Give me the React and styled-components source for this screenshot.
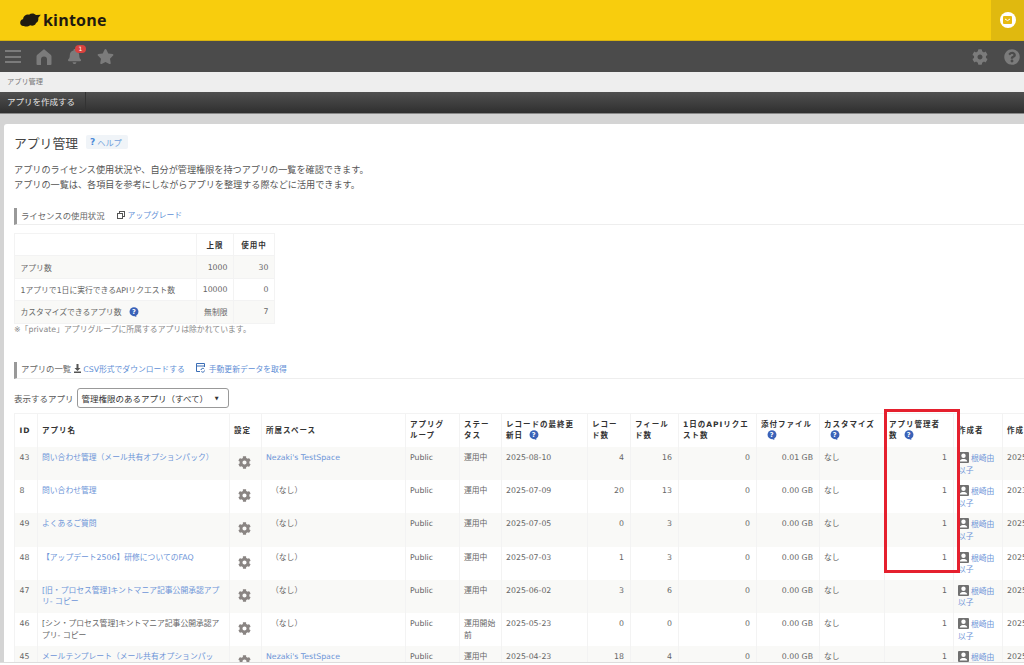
import React from "react";
import styled, { createGlobalStyle } from "styled-components";
import { FaBell, FaCog, FaStar, FaQuestionCircle } from "react-icons/fa";

const GlobalStyle = createGlobalStyle`
  html, body {
    margin: 0;
    height: 665px;
    overflow: hidden;
    background: #fff;
    color: #555;
    font-family: "DejaVu Sans", "Noto Sans CJK JP", sans-serif;
  }
  * { box-sizing: border-box; }
`;

const Page = styled.div`
  width: 1024px;
  height: 665px;
  display: flex;
  flex-direction: column;
  overflow: hidden;
  position: relative;
  background: #d4d4d4;
`;

const Header = styled.header`
  flex: 0 0 41px;
  display: flex;
  justify-content: space-between;
  background: #f8cd0d;
  border-bottom: 1px solid #d8b30f;
`;

const Logo = styled.div`
  display: flex;
  align-items: center;
  gap: 2px;
  padding-left: 20px;
  color: #1f1a10;
  font: 700 16px "Open Sans", sans-serif;
  letter-spacing: 0.2px;
`;

const NoticeTab = styled.div`
  width: 33px;
  display: flex;
  align-items: center;
  justify-content: center;
  background: #e0b90f;
`;

const NoticeDot = styled.div`
  width: 16px;
  height: 16px;
  border-radius: 50%;
  background: #fff;
  display: flex;
  align-items: center;
  justify-content: center;
`;

const Nav = styled.nav`
  flex: 0 0 31px;
  display: flex;
  align-items: center;
  justify-content: space-between;
  background: #4b4b4b;
  color: #7b7b7b;
  padding: 0 4px 0 5px;
`;

const NavGroup = styled.div`
  display: flex;
  align-items: center;
  gap: ${(p) => p.$gap}px;
`;

const Burger = styled.div`
  width: 16px;
  height: 13px;
  border-top: 2px solid #7b7b7b;
  border-bottom: 2px solid #7b7b7b;
  position: relative;
  &::after {
    content: "";
    position: absolute;
    left: 0;
    right: 0;
    top: 3.5px;
    height: 2px;
    background: #7b7b7b;
  }
`;

const BellWrap = styled.div`
  position: relative;
  display: flex;
`;

const Badge = styled.span`
  position: absolute;
  top: -4px;
  right: -4px;
  width: 11px;
  height: 8px;
  border-radius: 4px;
  background: #d9423f;
  color: #fff;
  font-size: 6px;
  line-height: 8px;
  text-align: center;
`;

const Breadcrumb = styled.div`
  flex: 0 0 20px;
  background: #eeeeee;
  color: #777;
  font-size: 7.2px;
  line-height: 19px;
  padding-left: 7px;
`;

const Toolbar = styled.div`
  flex: 0 0 22px;
  display: flex;
  background: linear-gradient(#505050, #2f2f2f);
  border-bottom: 1px solid #888;
`;

const ToolbarButton = styled.div`
  width: 86px;
  padding-left: 7px;
  color: #e4e4e4;
  font-size: 8.5px;
  line-height: 20px;
  border-right: 1px solid #333;
`;

const Card = styled.main`
  flex: 1;
  margin: 10px 0 0 4px;
  padding: 9px 0 0 10px;
  background: #fff;
  border-radius: 3px 0 0 0;
  overflow: hidden;
  position: relative;
`;

const TitleRow = styled.div`
  display: flex;
  align-items: center;
  gap: 8px;
  height: 18px;
`;

const Title = styled.h1`
  margin: 0;
  font-size: 12.8px;
  font-weight: 400;
  color: #444;
`;

const HelpChip = styled.a`
  display: flex;
  align-items: center;
  gap: 2px;
  height: 14px;
  padding: 0 6px 0 4px;
  background: #f0f4f8;
  border-radius: 2px;
  color: #6f9fdc;
  font-size: 8.2px;
  b {
    color: #4a8ad8;
    font-size: 9px;
  }
`;

const Lead = styled.p`
  margin: 12px 0 0;
  font-size: 9.15px;
  line-height: 14.5px;
  color: #555;
`;

const SectionHead = styled.div`
  display: flex;
  align-items: center;
  height: 17px;
  margin-top: ${(p) => p.$top}px;
  border-left: 3px solid #999;
  border-bottom: 1px solid #eee;
  padding: 0 0 3px 4px;
  font-size: 8.4px;
  color: #666;
`;

const SectionLink = styled.a`
  display: inline-flex;
  align-items: center;
  gap: ${(p) => p.$gap}px;
  margin-left: ${(p) => p.$left}px;
  color: #5f8fd6;
  font-size: 7.8px;
`;

const LicenseTable = styled.table`
  margin-top: 8px;
  border-collapse: collapse;
  table-layout: fixed;
  width: 260px;
  font-size: 7.8px;
  color: #666;
  tr { height: 22.4px; }
  tbody tr { background: #f9f9f7; }
  tbody tr:nth-child(even) { background: #fff; }
  th, td {
    border: 1px solid #f3f3f3;
    padding: 0 5.5px;
  }
  th {
    color: #333;
    font-size: 7.5px;
    font-weight: 700;
    letter-spacing: 1px;
    text-align: center;
  }
  td { white-space: nowrap; }
  td + td { text-align: right; }
`;

const Note = styled.div`
  font-size: 7.85px;
  line-height: 12px;
  color: #888;
`;

const FilterRow = styled.div`
  display: flex;
  align-items: center;
  gap: 3px;
  margin-top: 9px;
  font-size: 8.5px;
  color: #555;
`;

const Select = styled.div`
  width: 152px;
  height: 20px;
  display: flex;
  align-items: center;
  justify-content: space-between;
  padding: 0 9px 0 4px;
  border: 1px solid #999;
  border-radius: 3px;
  color: #333;
  font-size: 8.5px;
  i {
    font-style: normal;
    font-size: 5px;
  }
`;

const AppTable = styled.table`
  margin-top: 5px;
  border-collapse: collapse;
  table-layout: fixed;
  width: 1070px;
  font-size: 7.8px;
  color: #666;
  thead tr { height: 34px; }
  tbody tr { height: 33.2px; }
  tbody tr:nth-child(odd) { background: #f9f9f7; }
  th, td {
    border-left: 1px solid #f3f3f3;
    padding: 0 5.5px 0 4.5px;
    line-height: 11.5px;
  }
  thead tr { border-top: 1px solid #f3f3f3; }
  th {
    color: #333;
    font-weight: 700;
    font-size: 7.5px;
    text-align: left;
    letter-spacing: 1px;
    line-break: strict;
  }
  td { vertical-align: top; padding-top: 5px; }
`;

const NumCell = styled.td`
  text-align: right;
`;

const StatusCell = styled.td`
  && { padding-right: 2px; }
`;

const GearCell = styled.td`
  text-align: center;
  color: #8a8583;
  && { padding: 9px 1px 0 0; }
`;

const LinkText = styled.a`
  color: #6d95d8;
`;

const Plain = styled.span`
  padding-left: ${(p) => (p.$pad ? 5 : 0)}px;
`;

const Creator = styled.a`
  color: #6d95d8;
  svg { vertical-align: -2px; margin-right: 2px; }
`;

const Highlight = styled.div`
  position: absolute;
  left: 880px;
  top: 285px;
  width: 76px;
  height: 164px;
  border: 3px solid #e5202e;
  pointer-events: none;
`;

const Footer = styled.div`
  position: absolute;
  left: 0;
  right: 0;
  bottom: 0;
  height: 3px;
  background: #fff;
  border-top: 1px solid #ddd;
`;

const Tip = ({ left = 0 }) => (
  <svg width="10" height="10" viewBox="0 0 18 18" style={{ marginLeft: left, verticalAlign: -2 }}>
    <circle cx="9" cy="8.5" r="8" fill="#3a62b8" />
    <path d="M7 15l6-2 0 5z" fill="#3a62b8" />
    <text x="9" y="13" fontSize="12" fontWeight="700" textAnchor="middle" fill="#fff">?</text>
  </svg>
);

const UserIcon = () => (
  <svg width="11" height="11" viewBox="0 0 11 11">
    <rect width="11" height="11" rx="1" fill="#707070" />
    <circle cx="5.5" cy="3.800" r="2.200" fill="#fff" />
    <path d="M1.800 9.500c0-2.200 2.200-2.600 3.700-2.600s3.700.4 3.700 2.600z" fill="#fff" />
  </svg>
);

const HomeIcon = () => (
  <svg width="16" height="16" viewBox="0 0 16 16" fill="#7b7b7b">
    <path d="M8 .5c.4 0 .8.2 1 .4l5.700 4.800c.5.4.8 1 .8 1.700V15a1 1 0 0 1-1 1H11V10.500a3 3 0 0 0-6 0V16H1.500a1 1 0 0 1-1-1V7.400c0-.7.3-1.300.8-1.700L7 .9c.2-.2.6-.4 1-.4z" />
  </svg>
);

const headers = [
  ["ID", 22.5], ["アプリ名", 192], ["設定", 32], ["所属スペース", 144], ["アプリグループ", 54],
  ["ステータス", 42], ["レコードの最終更新日", 86, true], ["レコード数", 43], ["フィールド数", 48],
  ["1日のAPIリクエスト数", 78], ["添付ファイル", 63, true], ["カスタマイズ", 65, true],
  ["アプリ管理者数", 69, true], ["作成者", 49], ["作成日時", 82.5],
];

const SPACE = "Nezaki's TestSpace";

const apps = [
  { id: 43, name: "問い合わせ管理（メール共有オプションパック）", space: SPACE, date: "2025-08-10", rec: 4, fld: 16, size: "0.01 GB", made: "2025-07-11 10:45" },
  { id: 8, name: "問い合わせ管理", date: "2025-07-09", rec: 20, fld: 13, size: "0.00 GB", made: "2023-04-12 15:10" },
  { id: 49, name: "よくあるご質問", date: "2025-07-05", rec: 0, fld: 3, size: "0.00 GB", made: "2025-07-05 17:41" },
  { id: 48, name: "【アップデート2506】研修についてのFAQ", date: "2025-07-03", rec: 1, fld: 3, size: "0.00 GB", made: "2025-06-30 16:32" },
  { id: 47, name: "[旧・プロセス管理]キントマニア記事公開承認アプリ- コピー", date: "2025-06-02", rec: 3, fld: 6, size: "0.00 GB", made: "2025-05-23 19:35" },
  { id: 46, name: "[シン・プロセス管理]キントマニア記事公開承認アプリ- コピー", plain: true, status: "運用開始前", date: "2025-05-23", rec: 0, fld: 0, size: "0.00 GB", made: "2025-05-23 19:30" },
  { id: 45, name: "メールテンプレート（メール共有オプションパック）", space: SPACE, date: "2025-04-23", rec: 18, fld: 4, size: "0.00 GB", made: "2025-04-23 11:02" },
];

const App = () => (
  <Page lang="ja">
    <GlobalStyle />
    <Header>
      <Logo>
        <svg width="21" height="16" viewBox="0 0 21 15">
          <path d="M4 13.500c-2 .5-4-1-3.800-3.500C.3 8 1.500 6.800 3 6.700 3.500 3 6.500 1.600 9 2.200 11 .5 14.500.7 16 2.600l4.800-.3-2.500 2.900c.4 2.800-.7 4.700-2.300 5.300-.6 2.400-3.800 3.300-5.800 2.200-1.800 1.500-4.800 1.800-6.200.8z" fill="#1f1a10" />
        </svg>
        kintone
      </Logo>
      <NoticeTab>
        <NoticeDot>
          <svg width="9" height="8" viewBox="0 0 9 8">
            <rect width="9" height="8" rx="1" fill="#e8bb10" />
            <path d="M2 3l2.500 1.600L7 3" fill="none" stroke="#fff" strokeWidth="1" />
          </svg>
        </NoticeDot>
      </NoticeTab>
    </Header>
    <Nav>
      <NavGroup $gap={15}>
        <Burger />
        <HomeIcon />
        <BellWrap>
          <FaBell size={15} />
          <Badge>1</Badge>
        </BellWrap>
        <FaStar size={17} />
      </NavGroup>
      <NavGroup $gap={16}>
        <FaCog size={16} />
        <FaQuestionCircle size={16} />
      </NavGroup>
    </Nav>
    <Breadcrumb>アプリ管理</Breadcrumb>
    <Toolbar>
      <ToolbarButton>アプリを作成する</ToolbarButton>
    </Toolbar>
    <Card>
      <TitleRow>
        <Title>アプリ管理</Title>
        <HelpChip><b>?</b>ヘルプ</HelpChip>
      </TitleRow>
      <Lead>
        アプリのライセンス使用状況や、自分が管理権限を持つアプリの一覧を確認できます。<br />
        アプリの一覧は、各項目を参考にしながらアプリを整理する際などに活用できます。
      </Lead>
      <SectionHead $top={16}>
        ライセンスの使用状況
        <SectionLink $left={12} $gap={3}>
          <svg width="8" height="8" viewBox="0 0 8 8" fill="none" stroke="#555">
            <rect x="2.500" y="0.500" width="5" height="5" />
            <rect x="0.500" y="2.500" width="5" height="5" fill="#fff" />
          </svg>
          アップグレード
        </SectionLink>
      </SectionHead>
      <LicenseTable>
        <colgroup>
          <col width="182" />
          <col width="37" />
          <col width="41" />
        </colgroup>
        <thead>
          <tr><th /><th>上限</th><th>使用中</th></tr>
        </thead>
        <tbody>
          <tr><td>アプリ数</td><td>1000</td><td>30</td></tr>
          <tr><td>1アプリで1日に実行できるAPIリクエスト数</td><td>10000</td><td>0</td></tr>
          <tr><td>カスタマイズできるアプリ数<Tip left={8} /></td><td>無制限</td><td>7</td></tr>
        </tbody>
      </LicenseTable>
      <Note>※「private」アプリグループに所属するアプリは除かれています。</Note>
      <SectionHead $top={26}>
        アプリの一覧
        <SectionLink $left={3} $gap={2}>
          <svg width="7" height="9" viewBox="0 0 7 9" fill="#555">
            <path d="M2.500 0h2v4H6.500L3.500 7 .5 4h2zM0 7.500h7V9H0z" />
          </svg>
          CSV形式でダウンロードする
        </SectionLink>
        <SectionLink $left={11} $gap={4}>
          <svg width="9" height="10" viewBox="0 0 9 10" fill="none" stroke="#3a6db5">
            <path d="M4 8.500H.5v-8h8V4M.5 3h8" />
            <path d="M5 7a1.800 1.800 0 0 1 3.200-1M8.500 7.500A1.800 1.800 0 0 1 5.300 8.500" />
          </svg>
          手動更新データを取得
        </SectionLink>
      </SectionHead>
      <FilterRow>
        表示するアプリ
        <Select>管理権限のあるアプリ（すべて）<i>▼</i></Select>
      </FilterRow>
      <AppTable>
        <colgroup>
          {headers.map(([label, width]) => <col key={label} width={width} />)}
        </colgroup>
        <thead>
          <tr>
            {headers.map(([label, , tip]) => (
              <th key={label}>{label}{tip && <Tip left={6} />}</th>
            ))}
          </tr>
        </thead>
        <tbody>
          {apps.map((app) => (
            <tr key={app.id}>
              <td>{app.id}</td>
              <td>{app.plain ? <Plain>{app.name}</Plain> : <LinkText>{app.name}</LinkText>}</td>
              <GearCell><FaCog size={13} /></GearCell>
              <td>{app.space ? <LinkText>{app.space}</LinkText> : <Plain $pad>（なし）</Plain>}</td>
              <td>Public</td>
              <StatusCell>{app.status || "運用中"}</StatusCell>
              <td>{app.date}</td>
              <NumCell>{app.rec}</NumCell>
              <NumCell>{app.fld}</NumCell>
              <NumCell>0</NumCell>
              <NumCell>{app.size}</NumCell>
              <td>なし</td>
              <NumCell>1</NumCell>
              <td><Creator><UserIcon />根崎由以子</Creator></td>
              <td>{app.made}</td>
            </tr>
          ))}
        </tbody>
      </AppTable>
      <Highlight />
    </Card>
    <Footer />
  </Page>
);

export default App;
